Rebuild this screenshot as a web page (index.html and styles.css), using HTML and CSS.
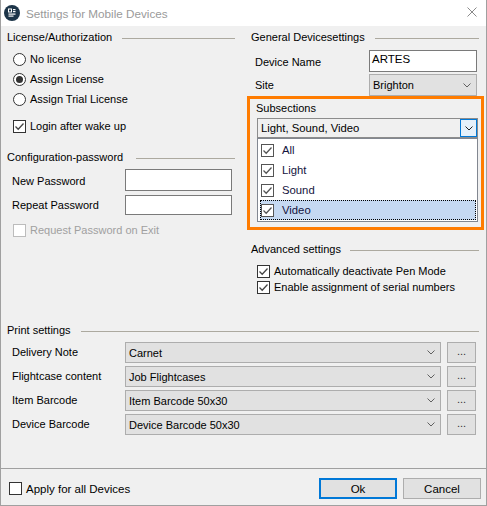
FILE: index.html
```html
<!DOCTYPE html>
<html>
<head>
<meta charset="utf-8">
<link rel="stylesheet" href="styles.css">
</head>
<body>
<div class="window">
  <div class="titlebar">
    <svg class="app-icon" width="16" height="16" viewBox="0 0 16 16">
      <circle cx="8" cy="8" r="8" fill="#1d3549"/>
      <rect x="4.5" y="4" width="3" height="3" fill="none" stroke="#fff" stroke-width="1"/>
      <rect x="9" y="4" width="2.5" height="1.2" fill="#fff"/>
      <rect x="9" y="6" width="2.5" height="1.2" fill="#fff"/>
      <rect x="4.5" y="8.5" width="7" height="1.2" fill="#fff"/>
      <rect x="4.5" y="10.5" width="5" height="1.2" fill="#fff"/>
    </svg>
    <span class="title">Settings for Mobile Devices</span>
    <svg class="close" width="10" height="10" viewBox="0 0 10 10">
      <path d="M0.5 0.5 L9.5 9.5 M9.5 0.5 L0.5 9.5" stroke="#8a8a8a" stroke-width="1" fill="none"/>
    </svg>
  </div>

  <div class="main">
    <div class="columns">
      <div class="col">
        <div class="group-head first">License/Authorization</div>
        <div class="radio-list">
          <div class="opt"><span class="radio"></span><span>No license</span></div>
          <div class="opt"><span class="radio on"></span><span>Assign License</span></div>
          <div class="opt"><span class="radio"></span><span>Assign Trial License</span></div>
        </div>
        <div class="opt login">
          <span class="check"><svg width="11" height="11" viewBox="0 0 11 11"><path d="M1.5 5.5 L4.2 8.2 L9.5 2.5" fill="none" stroke="#444" stroke-width="1.3"/></svg></span>
          <span>Login after wake up</span>
        </div>

        <div class="group-head config">Configuration-password</div>
        <div class="field first-field">
          <span class="label">New Password</span>
          <span class="input"></span>
        </div>
        <div class="field second-field">
          <span class="label">Repeat Password</span>
          <span class="input"></span>
        </div>
        <div class="opt disabled request">
          <span class="check"></span>
          <span>Request Password on Exit</span>
        </div>
      </div>

      <div class="col">
        <div class="group-head first">General Devicesettings</div>
        <div class="field name-field">
          <span class="label">Device Name</span>
          <span class="input text">ARTES</span>
        </div>
        <div class="field site-field">
          <span class="label">Site</span>
          <span class="combo">
            <span class="combo-text">Brighton</span>
            <svg class="chev" width="8" height="5" viewBox="0 0 8 5"><path d="M0.5 0.5 L4 4 L7.5 0.5" fill="none" stroke="#606060" stroke-width="1"/></svg>
          </span>
        </div>

        <div class="highlight">
          <div class="sub-label">Subsections</div>
          <div class="sub-combo">
            <span class="sub-text">Light, Sound, Video</span>
            <span class="sub-btn"><svg width="8" height="5" viewBox="0 0 8 5"><path d="M0.5 0.5 L4 4 L7.5 0.5" fill="none" stroke="#222" stroke-width="1"/></svg></span>
          </div>
          <div class="listbox">
            <div class="item"><span class="check lcheck"><svg width="11" height="11" viewBox="0 0 11 11"><path d="M1.5 5.5 L4.2 8.2 L9.5 2.5" fill="none" stroke="#555" stroke-width="1.3"/></svg></span><span>All</span></div>
            <div class="item"><span class="check lcheck"><svg width="11" height="11" viewBox="0 0 11 11"><path d="M1.5 5.5 L4.2 8.2 L9.5 2.5" fill="none" stroke="#555" stroke-width="1.3"/></svg></span><span>Light</span></div>
            <div class="item"><span class="check lcheck"><svg width="11" height="11" viewBox="0 0 11 11"><path d="M1.5 5.5 L4.2 8.2 L9.5 2.5" fill="none" stroke="#555" stroke-width="1.3"/></svg></span><span>Sound</span></div>
            <div class="item selected"><span class="check lcheck"><svg width="11" height="11" viewBox="0 0 11 11"><path d="M1.5 5.5 L4.2 8.2 L9.5 2.5" fill="none" stroke="#555" stroke-width="1.3"/></svg></span><span>Video</span></div>
          </div>
        </div>

        <div class="group-head advanced">Advanced settings</div>
        <div class="adv-list">
          <div class="opt small">
            <span class="check"><svg width="11" height="11" viewBox="0 0 11 11"><path d="M1.5 5.5 L4.2 8.2 L9.5 2.5" fill="none" stroke="#444" stroke-width="1.3"/></svg></span>
            <span>Automatically deactivate Pen Mode</span>
          </div>
          <div class="opt small">
            <span class="check"><svg width="11" height="11" viewBox="0 0 11 11"><path d="M1.5 5.5 L4.2 8.2 L9.5 2.5" fill="none" stroke="#444" stroke-width="1.3"/></svg></span>
            <span>Enable assignment of serial numbers</span>
          </div>
        </div>
      </div>
    </div>

    <div class="group-head print-head">Print settings</div>
    <div class="print-grid">
      <span class="plabel">Delivery Note</span>
      <span class="combo"><span class="combo-text">Carnet</span><svg class="chev" width="8" height="5" viewBox="0 0 8 5"><path d="M0.5 0.5 L4 4 L7.5 0.5" fill="none" stroke="#606060" stroke-width="1"/></svg></span>
      <span class="dots">...</span>

      <span class="plabel">Flightcase content</span>
      <span class="combo"><span class="combo-text">Job Flightcases</span><svg class="chev" width="8" height="5" viewBox="0 0 8 5"><path d="M0.5 0.5 L4 4 L7.5 0.5" fill="none" stroke="#606060" stroke-width="1"/></svg></span>
      <span class="dots">...</span>

      <span class="plabel">Item Barcode</span>
      <span class="combo"><span class="combo-text">Item Barcode 50x30</span><svg class="chev" width="8" height="5" viewBox="0 0 8 5"><path d="M0.5 0.5 L4 4 L7.5 0.5" fill="none" stroke="#606060" stroke-width="1"/></svg></span>
      <span class="dots">...</span>

      <span class="plabel">Device Barcode</span>
      <span class="combo"><span class="combo-text">Device Barcode 50x30</span><svg class="chev" width="8" height="5" viewBox="0 0 8 5"><path d="M0.5 0.5 L4 4 L7.5 0.5" fill="none" stroke="#606060" stroke-width="1"/></svg></span>
      <span class="dots">...</span>
    </div>
  </div>

  <div class="footer">
    <div class="opt apply">
      <span class="check"></span>
      <span>Apply for all Devices</span>
    </div>
    <span class="btn ok">Ok</span>
    <span class="btn cancel">Cancel</span>
  </div>
</div>
</body>
</html>
```

FILE: styles.css
```css
* { box-sizing: border-box; }
html, body { margin: 0; padding: 0; }
body {
  width: 487px;
  height: 506px;
  overflow: hidden;
  background: #f0f0f0;
  font-family: "Liberation Sans", Arial, sans-serif;
  font-size: 11px;
  color: #000;
}
.window {
  width: 487px;
  height: 506px;
  display: flex;
  flex-direction: column;
  border: 1px solid #a0a0a0;
  border-top: none;
  background: #f0f0f0;
}
.titlebar {
  height: 26px;
  flex: none;
  background: #fff;
  display: flex;
  align-items: center;
  padding-left: 3px;
}
.app-icon { flex: none; margin-top: -1px; }
.title {
  margin-left: 6px;
  font-size: 11.7px;
  color: #9a9a9a;
}
.close { margin-left: auto; margin-right: 9px; margin-top: -2px; }

.main {
  flex: 1;
  padding: 0 6px;
}
.columns {
  display: grid;
  grid-template-columns: 229px 229px;
  column-gap: 15px;
  align-items: start;
}
.group-head {
  display: flex;
  align-items: center;
  height: 14px;
  line-height: 14px;
  white-space: nowrap;
}
.group-head::after {
  content: "";
  flex: 1;
  height: 1px;
  background: #aca99f;
  margin-left: 10px;
  margin-right: 1px;
  margin-top: 2px;
}
.group-head.first { margin-top: 4px; }
.group-head.config { margin-top: 14px; }
.group-head.config::after { margin-left: 13px; }
.group-head.advanced { margin-top: 12px; }
.group-head.advanced::after { margin-left: 9px; }
.group-head.print-head { margin-top: 28px; }

.radio-list { margin-top: 5px; }
.opt {
  display: flex;
  align-items: center;
  height: 20px;
  padding-left: 6px;
  gap: 4px;
  white-space: nowrap;
}
.opt.small { height: 16px; }
.opt.login { margin-top: 7px; }
.opt.request { margin-top: 5px; }
.opt.disabled { color: #a0a0a0; }
.opt.disabled .check { border-color: #bcbcbc; }

.radio {
  width: 13px;
  height: 13px;
  border: 1px solid #333;
  border-radius: 50%;
  background: #fff;
  flex: none;
  display: flex;
  align-items: center;
  justify-content: center;
}
.radio.on::after {
  content: "";
  width: 7px;
  height: 7px;
  border-radius: 50%;
  background: #333;
}
.check {
  width: 13px;
  height: 13px;
  border: 1px solid #333;
  background: #fff;
  flex: none;
  display: flex;
  align-items: center;
  justify-content: center;
}
.check svg { display: block; }

.field {
  display: grid;
  grid-template-columns: 118px 107px;
  height: 20px;
  align-items: stretch;
}
.field .label { padding-left: 5px; line-height: 20px; padding-top: 2px; }
.field.first-field { margin-top: 5px; }
.field.second-field { margin-top: 6px; }
.field.second-field .label { padding-top: 0; }
.field.name-field { margin-top: 6px; grid-template-columns: 118px 108px; height: 19px; }
.field.name-field .label, .field.site-field .label { padding-left: 4px; }
.field.name-field .label { padding-top: 3px; line-height: 19px; }
.field.site-field { margin-top: 5px; grid-template-columns: 118px 108px; height: 21px; }
.field.site-field .label { padding-top: 1px; line-height: 21px; }
.input {
  background: #fff;
  border: 1px solid #7a7a7a;
}
.input.text {
  padding-left: 2px;
  line-height: 17px;
  font-size: 11.5px;
}
.combo {
  display: flex;
  align-items: center;
  background: #e1e1e1;
  border: 1px solid #adadad;
  padding-left: 3px;
  padding-right: 5px;
}
.combo-text { flex: 1; white-space: nowrap; }
.chev { flex: none; }

.highlight {
  margin: 1px -4px 0 -4px;
  border: 3px solid #ff7c00;
  padding: 2px 3px 5px 6px;
}
.sub-label { height: 14px; line-height: 14px; }
.sub-combo {
  margin-top: 3px;
  margin-left: 1px;
  height: 20px;
  display: flex;
  align-items: stretch;
  border: 1px solid #8c8c8c;
  background: #f0f0f0;
}
.sub-text { flex: 1; padding-left: 3px; line-height: 18px; font-size: 11.3px; }
.sub-btn {
  width: 17px;
  border: 1px solid #0078d7;
  background: #e5f1fb;
  display: flex;
  align-items: center;
  justify-content: center;
}
.listbox {
  margin-left: 1px;
  height: 84px;
  border: 1px solid #828790;
  background: #fff;
  padding: 1px;
}
.item {
  height: 20px;
  display: flex;
  align-items: center;
  padding-left: 2px;
  gap: 8px;
  color: #141440;
  font-size: 11.3px;
}
.lcheck { border-color: #555; margin-top: 1px; }
.item.selected {
  background: #c5d9f2;
  outline: 1px dotted #000;
  outline-offset: -1px;
  margin-left: 1px;
  padding-left: 1px;
}

.adv-list { margin-top: 7px; }

.print-grid {
  margin-top: 5px;
  display: grid;
  grid-template-columns: 118px 322px 29px;
  row-gap: 3px;
  grid-auto-rows: 21px;
}
.print-grid .combo { margin-right: 6px; }
.plabel { padding-left: 5px; line-height: 21px; white-space: nowrap; }
.dots {
  background: #e1e1e1;
  border: 1px solid #adadad;
  text-align: center;
  line-height: 17px;
  color: #333;
}

.footer {
  flex: none;
  height: 37px;
  border-top: 1px solid #a0a0a0;
  display: flex;
  align-items: center;
  padding: 9px 5px 6px 8px;
  gap: 6px;
}
.opt.apply { padding-left: 0; height: 21px; margin-right: auto; font-size: 11.5px; }
.btn {
  width: 78px;
  height: 21px;
  background: #e1e1e1;
  border: 1px solid #adadad;
  display: flex;
  align-items: center;
  justify-content: center;
  font-size: 11.5px;
}
.btn.ok { border: 2px solid #0078d7; }
```
